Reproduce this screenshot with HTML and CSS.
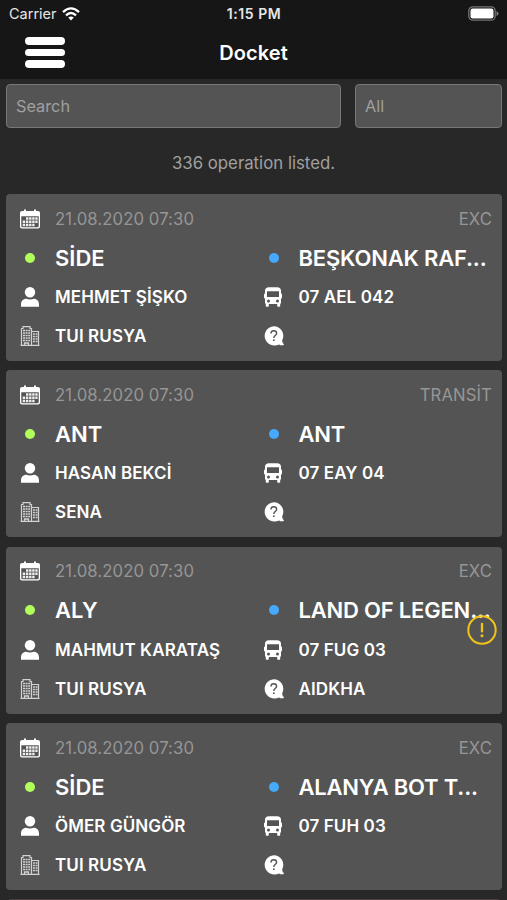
FILE: index.html
```html
<!DOCTYPE html>
<html lang="en">
<head>
<meta charset="utf-8">
<title>Docket</title>
<link rel="stylesheet" href="styles.css">
</head>
<body>
<svg class="defs" aria-hidden="true">
  <symbol id="cal" viewBox="0 0 20 20"><path fill="#fff" fill-rule="evenodd" d="M2 2h2V.5h2V2h8V.5h2V2h2a2 2 0 0 1 2 2v13.500a2 2 0 0 1-2 2H2a2 2 0 0 1-2-2V4a2 2 0 0 1 2-2ZM1.300 7.300v9.700q0 1.200 1.200 1.200h15q1.200 0 1.200-1.200V7.300Z"/><path fill="#eee" d="M6 8.300h2.400v2.500H6zM9.100 8.300h2.400v2.500H9.100zM12.200 8.300h2.400v2.500h-2.400zM15.300 8.300h2.300v2.500h-2.300zM2.700 11.500h2.500v2.500H2.700zM6 11.500h2.400v2.500H6zM9.100 11.500h2.400v2.500H9.100zM12.200 11.500h2.400v2.500h-2.400zM15.300 11.500h2.300v2.500h-2.300zM2.700 14.700h2.500v2.500H2.700zM6 14.700h2.400v2.500H6zM9.100 14.700h2.400v2.500H9.100zM12.200 14.700h2.400v2.500h-2.400z"/></symbol>
  <symbol id="user" viewBox="0 0 20 20"><circle cx="10" cy="5.300" r="5.200" fill="#fff"/><path fill="#fff" d="M1 19.800V17.500C1 14 3.500 11.800 6 11.800q4 1.600 8 0c2.500 0 5 2.200 5 5.700v2.300Z"/></symbol>
  <symbol id="firm" viewBox="0 0 20 20"><g fill="none" stroke="#d2d2d2"><path stroke-width="1.200" d="M1.500 19.500V2.500H3V.700h7v1.800h1.500v17M11.500 5.500h7v14M.5 19.400h19"/><path stroke-width="1.500" d="M3 4.500h7.500M3 7h7.500M3 9.500h7.500M3 12h7.500M3 14.500h7.500" stroke-dasharray="2 .6"/><path stroke-width="1.500" d="M13 8h4.500M13 10.500h4.500M13 13h4.500M13 15.500h4.500" stroke-dasharray="1.900 .7"/><path stroke-width="1.300" d="M4.500 19v-2h4v2"/></g></symbol>
  <symbol id="bus" viewBox="0 0 18 20"><path fill="#fff" fill-rule="evenodd" d="M5 .3h8q4 0 4 3.700v2.500q1 0 1 1v3q0 1-1 1V16.500h-.8V19q0 .7-.7.700h-1.600q-.7 0-.7-.7v-2H4.800v2q0 .7-.7.700H2.500q-.7 0-.7-.7v-2.500H1V11.500q-1 0-1-1v-3q0-1 1-1V4Q1 .3 5 .3ZM3 4.300v5.700h12V4.300ZM4.500 12.500a1.500 1.500 0 1 0 0 3a1.500 1.500 0 0 0 0-3ZM13.500 12.500a1.500 1.500 0 1 0 0 3a1.500 1.500 0 0 0 0-3Z"/></symbol>
  <symbol id="ask" viewBox="0 0 20 20"><path fill="#fff" d="M9.700.2a9.600 9.600 0 0 1 8.400 14.300q.2 2.300 1.700 3.600q.4 1-.8 1.200q-2.500.3-4-.9A9.700 9.700 0 1 1 9.700.2Z"/><path fill="none" stroke="#555" stroke-width="1.400" d="M7 7.500q0-2.700 2.800-2.700t2.800 2.500q0 1.200-1.400 2.200T9.800 12"/><circle cx="9.800" cy="14.200" r=".9" fill="#555"/></symbol>
</svg>

<header class="top">
  <div class="status">
    <div class="carrier"><span>Carrier</span>
      <svg class="wifi" viewBox="0 0 18 14"><g fill="none" stroke="#fff" stroke-width="2.300"><path d="M1 5.200Q9-2.400 17 5.200"/><path d="M4 8.400Q9 3.600 14 8.400"/></g><path fill="#fff" d="M6.200 10.500Q9 8.300 11.800 10.500L9 13.500Z"/></svg>
    </div>
    <div class="clock">1:15 PM</div>
    <svg class="battery" viewBox="0 0 31 15"><rect x=".8" y=".8" width="26.400" height="13.400" rx="4" fill="none" stroke="#747474" stroke-width="1.300"/><rect x="2.500" y="2.500" width="23" height="10" rx="2.200" fill="#fff"/><path fill="#858585" d="M28.500 5q2 1 2 2.500t-2 2.500Z"/></svg>
  </div>
  <div class="nav">
    <div class="menu"><i></i><i></i><i></i></div>
    <h1>Docket</h1>
  </div>
</header>

<div class="filters">
  <div class="field search">Search</div>
  <div class="field type">All</div>
</div>
<p class="count">336 operation listed.</p>

<main class="list">
  <section class="card">
    <div class="row"><svg class="ic"><use href="#cal"/></svg><span class="date">21.08.2020 07:30</span><span class="kind">EXC</span></div>
    <div class="row place"><b class="dot from"></b><span>SİDE</span><b class="dot to"></b><span>BEŞKONAK RAF...</span></div>
    <div class="row"><svg class="ic"><use href="#user"/></svg><span>MEHMET ŞİŞKO</span><svg class="ic bus"><use href="#bus"/></svg><span>07 AEL 042</span></div>
    <div class="row"><svg class="ic"><use href="#firm"/></svg><span>TUI RUSYA</span><svg class="ic"><use href="#ask"/></svg><span></span></div>
  </section>
  <section class="card">
    <div class="row"><svg class="ic"><use href="#cal"/></svg><span class="date">21.08.2020 07:30</span><span class="kind">TRANSİT</span></div>
    <div class="row place"><b class="dot from"></b><span>ANT</span><b class="dot to"></b><span>ANT</span></div>
    <div class="row"><svg class="ic"><use href="#user"/></svg><span>HASAN BEKCİ</span><svg class="ic bus"><use href="#bus"/></svg><span>07 EAY 04</span></div>
    <div class="row"><svg class="ic"><use href="#firm"/></svg><span>SENA</span><svg class="ic"><use href="#ask"/></svg><span></span></div>
  </section>
  <section class="card">
    <div class="row"><svg class="ic"><use href="#cal"/></svg><span class="date">21.08.2020 07:30</span><span class="kind">EXC</span></div>
    <div class="row place"><b class="dot from"></b><span>ALY</span><b class="dot to"></b><span>LAND OF LEGEN...</span></div>
    <div class="row"><svg class="ic"><use href="#user"/></svg><span>MAHMUT KARATAŞ</span><svg class="ic bus"><use href="#bus"/></svg><span>07 FUG 03</span></div>
    <div class="row"><svg class="ic"><use href="#firm"/></svg><span>TUI RUSYA</span><svg class="ic"><use href="#ask"/></svg><span>AIDKHA</span></div>
    <svg class="warn" viewBox="0 0 30 30"><circle cx="15" cy="15" r="13.700" fill="none" stroke="#f0c419" stroke-width="2"/><path stroke="#f0c419" stroke-width="2.300" stroke-linecap="round" d="M15 8.800v7.600"/><circle cx="15" cy="20.800" r="1.500" fill="#f0c419"/></svg>
  </section>
  <section class="card">
    <div class="row"><svg class="ic"><use href="#cal"/></svg><span class="date">21.08.2020 07:30</span><span class="kind">EXC</span></div>
    <div class="row place"><b class="dot from"></b><span>SİDE</span><b class="dot to"></b><span>ALANYA BOT T...</span></div>
    <div class="row"><svg class="ic"><use href="#user"/></svg><span>ÖMER GÜNGÖR</span><svg class="ic bus"><use href="#bus"/></svg><span>07 FUH 03</span></div>
    <div class="row"><svg class="ic"><use href="#firm"/></svg><span>TUI RUSYA</span><svg class="ic"><use href="#ask"/></svg><span></span></div>
  </section>
  <div class="next"></div>
</main>
</body>
</html>
```
FILE: styles.css
```css
* { box-sizing: border-box; }
html, body { height: 900px; overflow: hidden; }
body {
  margin: 0;
  background: #282828;
  color: #fff;
  font-family: Inter, "Liberation Sans", sans-serif;
}
.defs { display: none; }
.top { height: 79px; background: #161616; }
.status {
  display: grid;
  grid-template-columns: 1fr auto 1fr;
  align-items: center;
  height: 27px;
  padding: 0 8px 0 9px;
  font-size: 14.5px;
  color: #e6e6e6;
}
.carrier { display: flex; align-items: center; gap: 5.500px; }
.wifi { width: 18px; height: 14px; }
.clock { font-weight: 600; font-size: 14px; letter-spacing: .55px; }
.battery { width: 31px; height: 15px; justify-self: end; }
.nav {
  display: grid;
  grid-template-columns: 1fr auto 1fr;
  align-items: center;
  height: 51px;
}
.menu { display: flex; flex-direction: column; gap: 4px; margin-left: 25px; width: 40px; }
.menu i { height: 7.400px; border-radius: 4px; background: #fff; }
h1 { margin: 0; font-size: 20px; font-weight: 600; letter-spacing: .1px; }
.filters {
  display: grid;
  grid-template-columns: 335px 147px;
  gap: 14px;
  padding: 5px 6px 0;
}
.field {
  height: 44px;
  padding-left: 9px;
  border: 1px solid #777;
  border-radius: 4px;
  background: #545454;
  color: #a0a0a0;
  font-size: 16.3px;
  line-height: 42px;
}
.count {
  margin: 25px 0 0;
  height: 20px;
  line-height: 20px;
  text-align: center;
  font-size: 16.8px;
  color: #a0a0a0;
}
.list {
  display: flex;
  flex-direction: column;
  gap: 9.300px;
  height: 727px;
  padding: 21px 5px 0 6px;
  overflow: hidden;
}
.card {
  position: relative;
  flex: none;
  height: 167px;
  padding-top: 5.200px;
  border-radius: 4px;
  background: #545454;
}
.next { flex: none; height: 1px; margin: 0 3px; background: #4a4040; }
.row {
  display: grid;
  grid-template-columns: 49px 194.500px 49px 1fr;
  align-items: center;
  height: 39.100px;
  white-space: nowrap;
  font-size: 17px;
  font-weight: 600;
  letter-spacing: .1px;
}
.row .date, .row .kind { font-weight: 400; font-size: 16.700px; color: #969696; }
.row .kind { grid-column: 3 / 5; justify-self: end; margin-right: 10px; }
.place { font-size: 22px; letter-spacing: -.2px; }
.place span:first-of-type { letter-spacing: 0; }
.ic { width: 20px; height: 20px; margin-left: 14px; }
.bus { width: 18px; margin-left: 14.500px; }
.dot { width: 10px; height: 10px; margin-left: 19px; border-radius: 50%; }
.from { background: #b2ff59; }
.to { background: #46a9fb; }
.warn { position: absolute; right: 5px; top: 68px; width: 30px; height: 30px; }
```
